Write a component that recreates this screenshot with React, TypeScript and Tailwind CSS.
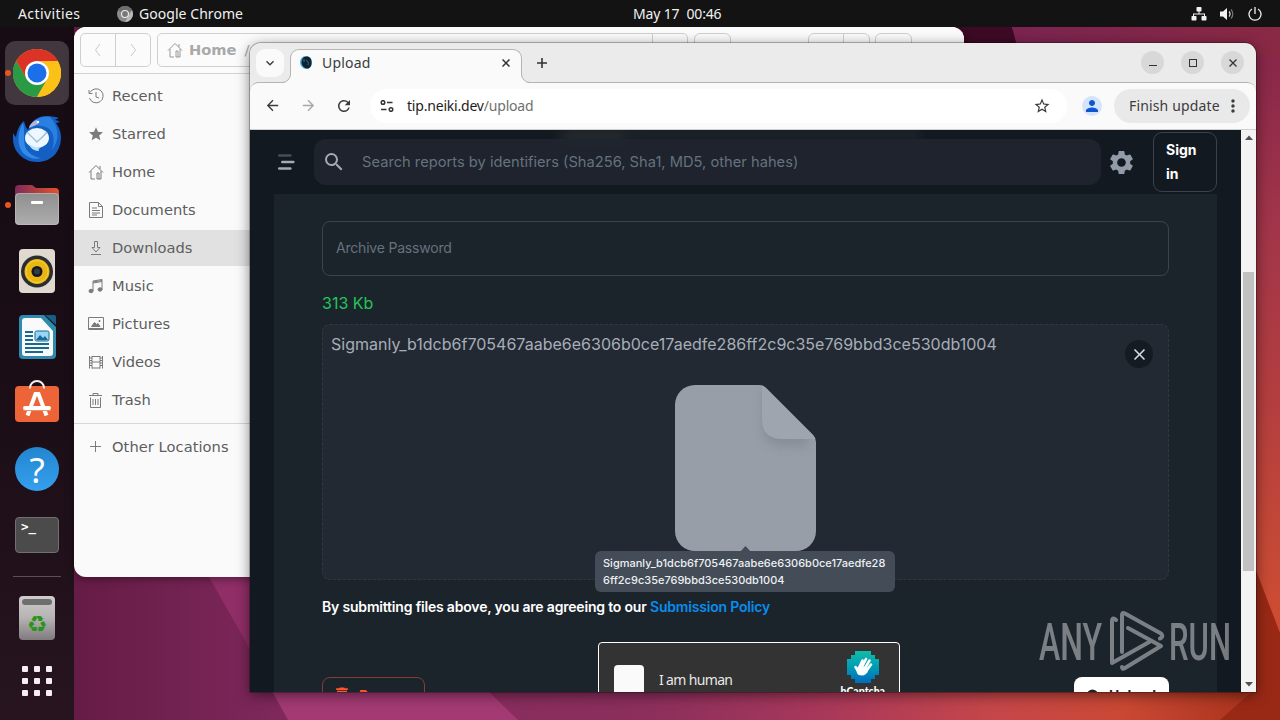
import React from 'react';
import {
    MdArrowBack,
    MdArrowForward,
    MdClose,
    MdDelete,
    MdKeyboardArrowDown,
    MdMoreVert,
    MdPerson,
    MdRefresh,
    MdSearch,
    MdSettings,
    MdStarBorder,
} from 'react-icons/md';

const Wallpaper: React.FC = () => (
    <svg className="absolute inset-0" width="1280" height="720" viewBox="0 0 1280 720">
        <defs>
            <linearGradient id="wall" x1="74" y1="0" x2="1280" y2="0" gradientUnits="userSpaceOnUse">
                <stop offset="0" stopColor="#651c45" />
                <stop offset="0.2" stopColor="#832a60" />
                <stop offset="0.48" stopColor="#8c2f5c" />
                <stop offset="0.62" stopColor="#a8385a" />
                <stop offset="0.76" stopColor="#c5464a" />
                <stop offset="0.87" stopColor="#ca4833" />
                <stop offset="1" stopColor="#a32f18" />
            </linearGradient>
            <linearGradient id="side" x1="0" y1="27" x2="0" y2="600" gradientUnits="userSpaceOnUse">
                <stop offset="0" stopColor="#84254a" />
                <stop offset="0.35" stopColor="#a23549" />
                <stop offset="0.65" stopColor="#b43e3f" />
                <stop offset="1" stopColor="#cb4c33" />
            </linearGradient>
            <linearGradient id="top" x1="1012" y1="0" x2="1280" y2="0" gradientUnits="userSpaceOnUse">
                <stop offset="0" stopColor="#7a2450" />
                <stop offset="1" stopColor="#8a2944" />
            </linearGradient>
        </defs>
        <rect width="1280" height="720" fill="url(#wall)" />
        <path d="M209 577h91v90H260Z" fill="#8f2e67" />
        <path d="M268 684h213l37 36H288Z" fill="#a33a73" />
        <path d="M1200 43h80v677h-20V43Z" fill="url(#side)" />
        <path d="M1256 43h24v677h-24Z" fill="url(#side)" />
        <path d="M900 27h112l8 18H900Z" fill="#3d0a24" />
        <path d="M1012 27h268v30h-260Z" fill="url(#top)" />
        <path d="M1254 565l26 68v87h-60l34-30Z" fill="#992915" />
    </svg>
);

const TopBar: React.FC = () => (
    <div className="relative z-10 flex h-[27px] items-center bg-[#131313] text-[14px] text-[#f0f0f0] font-['Noto_Sans',sans-serif]">
        <span className="ml-[18px] w-[99px] tracking-[0.4px] whitespace-nowrap">Activities</span>
        <svg width="16" height="16" viewBox="0 0 16 16">
            <circle cx="8" cy="8" r="8" fill="#8a8a8a" />
            <path d="M8 8 1 4.2A8 8 0 0 1 15 4.2Z" fill="#6d6d6d" />
            <path d="M15 4.2A8 8 0 0 1 8 16l3.5-6Z" fill="#b9b9b9" />
            <circle cx="8" cy="8" r="4" fill="#eee" />
            <circle cx="8" cy="8" r="2.9" fill="#777" />
        </svg>
        <span className="ml-1.5 w-[494px] tracking-[0.05px] whitespace-nowrap">Google Chrome</span>
        <span className="tracking-[-0.15px] whitespace-pre">May 17  00:46</span>
        <div className="ml-auto flex items-center gap-[13px] pr-[18px]">
            <svg width="16" height="14" viewBox="0 0 16 14" fill="#f2f2f2">
                <rect x="5.5" y="0" width="5" height="4.5" rx="0.8" />
                <rect x="0.5" y="9" width="5" height="4.5" rx="0.8" />
                <rect x="10.5" y="9" width="5" height="4.5" rx="0.8" />
                <path d="M7.5 4h1v2.5H14V9h-1V7.500H3V9H2V6.500h5.500Z" />
            </svg>
            <svg width="15" height="14" viewBox="0 0 15 14" fill="none">
                <path d="M0 4.500h3L7 1v12L3 9.500H0Z" fill="#f2f2f2" />
                <path d="M9 4.500a3.500 3.500 0 0 1 0 5" stroke="#e5e5e5" strokeWidth="1.200" />
                <path d="M11 2.500a6.500 6.500 0 0 1 0 9" stroke="#777" strokeWidth="1.200" />
            </svg>
            <svg width="14" height="14" viewBox="0 0 14 14" fill="none" stroke="#f2f2f2" strokeWidth="1.300">
                <path d="M4 2a6 6 0 1 0 6 0M7 0v7" />
            </svg>
        </div>
    </div>
);

const ChromeIcon: React.FC = () => (
    <svg width="48" height="48" viewBox="0 0 48 48">
        <circle cx="24" cy="24" r="24" fill="#fbc116" />
        <path d="M24 12h20.800l-3-4.200L24 0 3.200 12l10.400 18Z" fill="#dd3226" />
        <path d="M24 24 3.200 12a24 24 0 0 1 41.600 0Z" fill="#dd3226" />
        <path d="M3.200 12A24 24 0 0 0 24 48l10.400-18L24 24 13.600 30Z" fill="#2a9a45" />
        <path d="M44.800 12A24 24 0 0 1 24 48l10.400-18A12 12 0 0 0 24 12Z" fill="#fbc116" />
        <circle cx="24" cy="24" r="12" fill="#fff" />
        <circle cx="24" cy="24" r="9.500" fill="#1b6fe8" />
    </svg>
);

const ThunderbirdIcon: React.FC = () => (
    <svg width="48" height="48" viewBox="0 0 48 48">
        <path d="M0 18c1 2 2 3 3 4 1-7 4-13 8-16 1 4 2 7 4 9 1-2 1-4 2-5 4-6 10-9 17-9 5 0 9 1 12 2-2 1-3 1-4 2 2 0 3 1 5 2l-4 1c3 4 5 9 5 14 0 15-10 25-24 25S0 36 0 24Z" fill="#145fc4" />
        <path d="M10 8C5 16 3 29 10 38c5 5 12 7 18 5-7-1-14-5-16-12-2-8 0-16-2-23Z" fill="#338be8" />
        <path d="M18 10c4-7 12-9 19-8 8 8 11 22 2 33 3-9 2-18-4-22-6-3-10-2-17-3Z" fill="#2a80e0" />
        <path d="M16 13c1-4 4-7 8-8l1 4-4 2Z" fill="#b3b4da" />
        <circle cx="25" cy="7" r="1.200" fill="#fff" />
        <ellipse cx="24" cy="23" rx="12" ry="10" fill="#edf7ff" />
        <path d="M14 17c4 4 7 7 10 10 3-3 7-6 10-10" fill="none" stroke="#9fbdd4" strokeWidth="1.300" />
        <path d="M15 28c4 4 9 5 13 4-2 2-3 2-2 4-5 0-9-3-11-8Z" fill="#b9e2fb" />
    </svg>
);

const FilesIcon: React.FC = () => (
    <svg width="44" height="40" viewBox="0 0 44 40">
        <defs>
            <linearGradient id="tab" x1="0" x2="1">
                <stop offset="0" stopColor="#7b2b5b" />
                <stop offset="1" stopColor="#e65329" />
            </linearGradient>
            <linearGradient id="folder" x1="0" y1="0" x2="0" y2="1">
                <stop offset="0" stopColor="#8f8f8f" />
                <stop offset="1" stopColor="#adadad" />
            </linearGradient>
        </defs>
        <path d="M0 12V4a4 4 0 0 1 4-4h13l4 3h19a4 4 0 0 1 4 4v8H0Z" fill="url(#tab)" />
        <rect y="8" width="44" height="32" rx="4" fill="url(#folder)" />
        <rect x="0.500" y="8.500" width="43" height="31" rx="4" fill="none" stroke="#c4c0be" strokeOpacity="0.600" />
        <rect x="16" y="16" width="12" height="3" rx="1" fill="#fff" />
    </svg>
);

const SpeakerIcon: React.FC = () => (
    <svg width="36" height="44" viewBox="0 0 36 44">
        <rect width="36" height="44" rx="4" fill="#dfd9d0" />
        <circle cx="18" cy="22.500" r="16" fill="#2a2d31" />
        <circle cx="18" cy="22.500" r="12.500" fill="#e9b613" />
        <circle cx="18" cy="22.500" r="11" fill="none" stroke="#f8d13c" />
        <circle cx="18" cy="22.500" r="5.500" fill="#15181d" />
        <circle cx="18" cy="22.500" r="3" fill="#343b45" />
    </svg>
);

const WriterIcon: React.FC = () => (
    <svg width="37" height="44" viewBox="0 0 37 44">
        <path d="M4 0h21l12 12v28a4 4 0 0 1-4 4H4a4 4 0 0 1-4-4V4a4 4 0 0 1 4-4Z" fill="#2f8bad" />
        <path d="M26 0h9a2 2 0 0 1 2 2v8Z" fill="#175f87" />
        <path d="M6 3h16l12 13v22a3 3 0 0 1-3 3H6a3 3 0 0 1-3-3V6a3 3 0 0 1 3-3Z" fill="#fafafa" />
        <path d="M6 17h8M6 21h8M6 25h8M6 29h24M6 33h24M6 37h18" stroke="#166b93" strokeWidth="2" />
        <rect x="16" y="16" width="14" height="10" rx="1.500" fill="#9bd5f6" stroke="#166b93" />
        <path d="m17 25 4-5 3 3 2-2 3 4Z" fill="#156b96" />
    </svg>
);

const SoftwareIcon: React.FC = () => (
    <svg className="-mt-[5px]" width="44" height="42" viewBox="0 0 44 42">
        <rect y="6" width="44" height="36" rx="4" fill="#ec6438" />
        <path d="M15 8.500V8a7 7 0 0 1 14 0v.5" fill="none" stroke="#f6eee9" strokeWidth="2" />
        <path d="M12.500 35.500 20.500 14h3l8 21.500" fill="none" stroke="#fff" strokeWidth="4" />
        <rect x="8" y="26" width="28" height="4" rx="2" fill="#fff" />
        <path d="M8 30.500h28" stroke="#ec8c69" />
    </svg>
);

const HelpIcon: React.FC = () => (
    <div className="flex h-11 w-11 items-center justify-center rounded-full bg-linear-to-b from-[#2385d0] to-[#35a0ee] text-[35px] leading-none text-white font-['Noto_Sans',sans-serif]">
        ?
    </div>
);

const TerminalIcon: React.FC = () => (
    <div className="h-9 w-11 rounded-[4px] border border-[#707070] bg-[#4b4b4b] pl-[5px] text-[12.5px] leading-[17px] font-bold text-white font-['DejaVu_Sans_Mono',monospace]">
        &gt;_
    </div>
);

const TrashIcon: React.FC = () => (
    <div className="flex h-11 w-9 flex-col items-center rounded-[4px] bg-linear-to-b from-[#cfcdcb] via-[#b5b3b3] to-[#817b80] pt-[3px]">
        <div className="h-[6px] w-[30px] rounded-[3px] bg-[#6f6f6f]" />
        <span className="mt-[7px] text-[23px] leading-[24px] font-bold text-[#2a9419] font-['DejaVu_Sans',sans-serif]">♻</span>
    </div>
);

const dockApps = [
    { name: 'chrome', icon: <ChromeIcon />, active: true, running: true },
    { name: 'thunderbird', icon: <ThunderbirdIcon /> },
    { name: 'files', icon: <FilesIcon />, running: true },
    { name: 'music', icon: <SpeakerIcon /> },
    { name: 'writer', icon: <WriterIcon /> },
    { name: 'software', icon: <SoftwareIcon /> },
    { name: 'help', icon: <HelpIcon /> },
    { name: 'terminal', icon: <TerminalIcon /> },
];

const Dock: React.FC = () => (
    <div className="relative flex h-[693px] w-[74px] flex-col items-center bg-linear-to-b from-[#170c13] via-[#1a0d16] to-[#27141f] pt-[13px]">
        {dockApps.map((app) => (
            <div key={app.name} className="relative flex h-[66px] w-full shrink-0 items-center justify-center">
                <div
                    className={
                        app.active
                            ? 'flex h-16 w-16 items-center justify-center rounded-[10px] bg-[#43373f]'
                            : 'flex h-16 w-16 items-center justify-center'
                    }
                >
                    {app.icon}
                </div>
                {app.running && <span className="absolute top-[30px] left-[5px] h-[6px] w-[6px] rounded-full bg-[#e95420]" />}
            </div>
        ))}
        <div className="flex h-[17px] shrink-0 items-center">
            <div className="h-px w-12 bg-[#5b5057]" />
        </div>
        <div className="flex h-[66px] shrink-0 items-center">
            <TrashIcon />
        </div>
        <div className="grid h-[60px] shrink-0 grid-cols-3 content-center gap-[6px]">
            {[0, 1, 2, 3, 4, 5, 6, 7, 8].map((dot) => (
                <span key={dot} className="h-[6px] w-[6px] rounded-[1px] bg-[#f7edf4]" />
            ))}
        </div>
    </div>
);

const homePath = 'M1 8.500 8 1.500l7 7M3 7v8h4M13 7v8h-2M12 2v3M9 9h2v6H9Z';

const places = [
    { name: 'Recent', d: 'M2 4.500A7 7 0 1 1 1.500 10M1 2v3.500h3.500M8 4v5l3 1' },
    { name: 'Starred', d: 'm8 1.200 2 4.600 5 .4-3.800 3.200 1.200 4.900L8 11.700l-4.400 2.600 1.200-4.900L1 6.200l5-.4Z', solid: true },
    { name: 'Home', d: homePath },
    { name: 'Documents', d: 'M1.500 .500h9l4 4v11h-13ZM10.500 .500v4h4M4 6h5M4 8.500h8M4 11h8M4 13h5' },
    { name: 'Downloads', d: 'M6.500 1.500h3v6h2.500L8 12 4 7.500h2.500ZM3 14.500h10', active: true },
    { name: 'Music', d: 'M5 13V3l9-1.500v10M5 5l9-1.500M5 4l9-1.500', notes: true },
    { name: 'Pictures', d: 'M.500 1.500h15v12H.500ZM.500 12.500h15', picture: true },
    { name: 'Videos', d: 'M1.500 2v12.500M14.500 2v12.500M4 2v12.500M12 2v12.500M4 2.500h8M4 8h8M4 14h8M1.500 4H4M1.500 6.500H4M1.500 9H4M1.500 11.500H4M12 4h2.500M12 6.500h2.500M12 9h2.500M12 11.500h2.500' },
    { name: 'Trash', d: 'M1 3.500h13M5 3.500v-2h5v2M2.500 5.500v10h10v-10M5 7v6M7.500 7v6M10 7v6' },
];

const FileManager: React.FC = () => (
    <div className="absolute top-[27px] left-[74px] h-[550px] w-[890px] overflow-hidden rounded-[12px] bg-[#fafafa] text-[14.67px] text-[#5e5e5e] shadow-[0_2px_8px_rgba(0,0,0,0.4)] font-['DejaVu_Sans',sans-serif]">
        <div className="flex h-[47px] items-start border-b border-[#d3d3d3] bg-[#fbfbfb] pt-[6px] pl-[6px]">
            <div className="flex h-[34px] w-[71px] rounded-[5px] border border-[#cfcfcf]">
                <div className="flex w-[35px] items-center justify-center border-r border-[#cfcfcf]">
                    <svg width="8" height="14" viewBox="0 0 8 14" fill="none" stroke="#c9c9c9"><path d="M6 1 1.500 7 6 13" /></svg>
                </div>
                <div className="flex flex-1 items-center justify-center">
                    <svg width="8" height="14" viewBox="0 0 8 14" fill="none" stroke="#c9c9c9"><path d="m2 1 4.500 6L2 13" /></svg>
                </div>
            </div>
            <div className="ml-[6px] flex h-[34px] w-[531px] items-center rounded-[5px] border border-[#cfcfcf] pl-[9px] font-bold text-[#a9a9a9]">
                <svg width="16" height="16" viewBox="0 0 16 16" fill="none" stroke="#999"><path d={homePath} /></svg>
                <span className="ml-[6px]">Home</span>
                <span className="ml-[8px] font-normal">/</span>
                <div className="ml-auto h-full w-[35px] border-l border-[#cfcfcf]" />
            </div>
            <div className="ml-[6px] h-[34px] w-[37px] rounded-[6px] border border-[#cfcfcf]" />
            <div className="ml-[77px] h-[34px] w-[62px] rounded-[6px] border border-[#cfcfcf]">
                <div className="h-full w-[35px] border-r border-[#cfcfcf]" />
            </div>
            <div className="ml-[5px] h-[34px] w-[37px] rounded-[6px] border border-[#cfcfcf]" />
        </div>
        <div className="flex w-[178px] flex-col gap-[2px] pt-1">
            {places.map((place) => (
                <div
                    key={place.name}
                    className={place.active ? 'flex h-9 items-center bg-[#e1e1e1] pl-[14px]' : 'flex h-9 items-center pl-[14px]'}
                >
                    <svg width="16" height="16" viewBox="0 0 16 16" fill={place.solid ? '#7b7b7b' : 'none'} stroke={place.solid ? 'none' : '#7b7b7b'}>
                        <path d={place.d} />
                        {place.notes && <path d="M5 13a2 1.700 0 1 1-2-1.700c1 0 2 .3 2 1.700ZM14 11.500a2 1.700 0 1 1-2-1.700c1 0 2 .3 2 1.700Z" fill="#7b7b7b" />}
                        {place.picture && <path d="m3.500 10.500 3-4 2 2 1.500-1 2 3ZM11 4.500h1v1h-1Z" fill="#7b7b7b" />}
                    </svg>
                    <span className="ml-2">{place.name}</span>
                </div>
            ))}
        </div>
        <div className="mt-[5px] h-px w-[178px] bg-[#d6d6d6]" />
        <div className="mt-[5px] flex h-9 items-center pl-[14px]">
            <svg width="16" height="16" viewBox="0 0 16 16" stroke="#7b7b7b"><path d="M2 7.500h11M7.500 2v11" /></svg>
            <span className="ml-2 tracking-[0.05px]">Other Locations</span>
        </div>
    </div>
);

const TabStrip: React.FC = () => (
    <div className="flex h-[39px] items-start bg-[#ebebeb] pt-[6px] pl-[6px] text-[#3c3c3c]">
        <div className="flex h-7 w-7 items-center justify-center rounded-[9px] bg-[#fafafa]">
            <MdKeyboardArrowDown size={16} />
        </div>
        <div className="relative z-10 ml-[6px] flex h-[34px] w-[232px] items-center rounded-t-[9px] border border-b-0 border-[#b4b4b4] bg-[#fafafa] pb-[8px] pl-[9px]">
            <svg className="absolute bottom-0 -left-[9px]" width="9" height="9" viewBox="0 0 9 9">
                <path d="M9 0v9H0A8.500 8.500 0 0 0 8.500 0" fill="#fafafa" />
                <path d="M0 8.500A8.500 8.500 0 0 0 8.500 0" fill="none" stroke="#b4b4b4" />
            </svg>
            <svg className="absolute -right-[9px] bottom-0" width="9" height="9" viewBox="0 0 9 9">
                <path d="M0 0v9h9A8.500 8.500 0 0 1 .500 0" fill="#fafafa" />
                <path d="M9 8.500A8.500 8.500 0 0 1 .500 0" fill="none" stroke="#b4b4b4" />
            </svg>
            <svg width="13" height="13" viewBox="0 0 13 13">
                <path d="M6 0c4 0 6 3 6 6.500S10 13 6.500 13 0 10 0 6.500 2 0 6 0Z" fill="#4eb4df" />
                <path d="M6.500 .500c3 0 5 2 5 6S9.500 12.500 7 12.500 1.500 9.500 1.500 6.500 3 .500 6.500 .500Z" fill="#10232f" />
                <path d="M6 4c2 1 3 3 2 5M4 3v3" fill="none" stroke="#2d7595" />
            </svg>
            <span className="ml-[9px] text-[14px] leading-5 tracking-[0.2px]">Upload</span>
            <svg className="mr-[11px] ml-auto" width="8" height="8" viewBox="0 0 8 8" stroke="#333" strokeWidth="1.500"><path d="m.5.5 7 7M7.500.5l-7 7" /></svg>
        </div>
        <svg className="mt-2 ml-[14px]" width="12" height="12" viewBox="0 0 12 12" stroke="#333" strokeWidth="1.600"><path d="M6 1v10M1 6h10" /></svg>
        <div className="mt-[2px] mr-[12px] ml-auto flex gap-[17px]">
            <div className="flex h-[23px] w-[23px] items-center justify-center rounded-full bg-[#d8d8d8]">
                <svg width="8" height="8" viewBox="0 0 8 8" stroke="#333"><path d="M0 6.500h8" /></svg>
            </div>
            <div className="flex h-[23px] w-[23px] items-center justify-center rounded-full bg-[#d8d8d8]">
                <div className="h-2 w-2 border border-[#333]" />
            </div>
            <div className="flex h-[23px] w-[23px] items-center justify-center rounded-full bg-[#d8d8d8]">
                <svg width="8" height="8" viewBox="0 0 8 8" stroke="#333" strokeWidth="1.300"><path d="m.5.5 7 7M7.500.5l-7 7" /></svg>
            </div>
        </div>
    </div>
);

const Toolbar: React.FC = () => (
    <div className="bg-[#ebebeb]">
        <div className="flex h-12 items-center rounded-t-[9px] border-t border-b border-t-[#b4b4b4] border-b-[#d0d0d0] bg-[#fafafa] pb-px pl-2 text-[#3c3c3c]">
            <div className="flex gap-2">
                <div className="flex h-7 w-7 items-center justify-center"><MdArrowBack size={17} /></div>
                <div className="flex h-7 w-7 items-center justify-center text-[#a8a8a8]"><MdArrowForward size={17} /></div>
                <div className="flex h-7 w-7 items-center justify-center"><MdRefresh size={18} /></div>
            </div>
            <div className="ml-3 flex h-[34px] w-[697px] items-center rounded-full bg-white pr-4 pl-[10px]">
                <svg width="14" height="12" viewBox="0 0 14 12" fill="none" stroke="#333" strokeWidth="1.500">
                    <circle cx="3" cy="2.500" r="1.800" />
                    <path d="M7 2.500h5.500M1 9.500h5.500" />
                    <circle cx="11" cy="9.500" r="1.800" />
                </svg>
                <span className="ml-[13px] text-[14px] tracking-[-0.2px] text-[#1d1d1d]">
                    tip.neiki.dev<span className="text-[#6f6f6f]">/upload</span>
                </span>
                <MdStarBorder className="ml-auto" size={18} />
            </div>
            <div className="ml-[15px] flex h-5 w-5 items-center justify-center rounded-full bg-[#d5e3fd] text-[#0b57d0]">
                <MdPerson size={18} />
            </div>
            <div className="ml-3 flex h-[34px] w-[136px] items-center rounded-full bg-[#e9e9e9] pl-[15px] text-[14px] tracking-[0.15px]">
                <span className="whitespace-nowrap">Finish update</span>
                <MdMoreVert className="mr-[7px] ml-auto" size={20} />
            </div>
        </div>
    </div>
);

const PageHeader: React.FC = () => (
    <div className="relative flex h-16 items-center bg-[#131920] pl-[27px]">
        <div className="absolute top-0 left-[310px] h-3 w-[70px] rounded-full bg-[#3a403e] opacity-60 blur-[7px]" />
        <div className="absolute top-0 left-[380px] h-2 w-[290px] bg-[#292e36] opacity-60 blur-[4px]" />
        <svg width="18" height="18" viewBox="0 0 18 18" fill="none" strokeWidth="2.600" strokeLinecap="round">
            <path d="M2.300 2.500h11" stroke="#474e58" />
            <path d="M5.300 9h11" stroke="#a5abb4" />
            <path d="M2.300 15.500h11" stroke="#a5abb4" />
        </svg>
        <div className="relative ml-[19px] flex h-[46px] w-[787px] items-center rounded-[12px] bg-[#20252f]/90 pl-[8px]">
            <MdSearch className="text-[#a3aab3]" size={24} />
            <span className="ml-[16px] text-[14.7px] whitespace-nowrap text-[#65727e]">
                Search reports by identifiers (Sha256, Sha1, MD5, other hahes)
            </span>
        </div>
        <MdSettings className="ml-[6px] text-[#929ca8]" size={29} />
        <div className="ml-[17px] h-[60px] w-16 rounded-[9px] border border-[#3a434c] py-[5px] pl-[12px] text-[14px] leading-6 font-bold text-white">
            Sign
            <br />
            in
        </div>
    </div>
);

const FilePreview: React.FC = () => (
    <svg width="141" height="166" viewBox="0 0 141 166">
        <defs>
            <filter id="fold" x="-20%" y="-20%" width="150%" height="150%">
                <feGaussianBlur stdDeviation="4" />
            </filter>
            <clipPath id="sheet">
                <path d="M20 0H84q4 0 7 3L138 50q3 3 3 7v89a20 20 0 0 1-20 20H20A20 20 0 0 1 0 146V20A20 20 0 0 1 20 0Z" />
            </clipPath>
        </defs>
        <g clipPath="url(#sheet)">
            <rect width="141" height="166" fill="#979ea8" />
            <path d="M87 5v33q0 24 22 24h24V50Z" fill="#828993" opacity="0.700" filter="url(#fold)" />
            <path d="M87 0v34q0 20 20 20h34V0Z" fill="#9fa5af" />
        </g>
    </svg>
);

const HCaptcha: React.FC = () => (
    <div className="ml-[173px] flex h-[78px] w-[302px] rounded-[4px] border border-white bg-[#333]">
        <div className="mt-[22px] ml-[15px] h-[30px] w-[30px] rounded-[4px] bg-[#fafafa]" />
        <span className="mt-[27px] ml-[15px] text-[14px] leading-5 tracking-[-0.65px] text-[#e8e8e8] font-['Noto_Sans',sans-serif]">I am human</span>
        <div className="mt-[8px] mr-[14px] ml-auto flex flex-col items-center">
            <svg width="32" height="32" viewBox="0 0 32 32">
                <defs>
                    <linearGradient id="hc" x1="0" y1="0" x2="0" y2="1">
                        <stop offset="0" stopColor="#12bca8" />
                        <stop offset="0.500" stopColor="#009cb4" />
                        <stop offset="1" stopColor="#006bc0" />
                    </linearGradient>
                </defs>
                <path d="M8 0h16v4h4v4h4v16h-4v4h-4v4H8v-4H4v-4H0V8h4V4h4Z" fill="url(#hc)" />
                <g stroke="#fff" strokeWidth="2.600" strokeLinecap="round" fill="none">
                    <path d="m12 17 3.500-7.500M14.500 17l4.500-9M17.500 18l5-8.500M20 19l4-5.500M8.500 16l2.500 4" />
                </g>
                <path d="M11 15.500h9l1.500 3c-1 4-3.500 6-7 6-4 0-5.500-3-4.500-6Z" fill="#fff" />
            </svg>
            <span className="mt-[1px] text-[10.500px] leading-[14px] font-black text-white font-['Lato',sans-serif]">hCaptcha</span>
        </div>
    </div>
);

const UploadPage: React.FC = () => (
    <div className="h-[562px] w-[991px] overflow-hidden bg-[#131920] font-['Inter',sans-serif]">
        <PageHeader />
        <div className="mx-6 flex h-[498px] flex-col overflow-hidden bg-[#1c242b] px-12 pt-[27px]">
            <div className="flex h-[55px] shrink-0 items-center rounded-[8px] border border-[#3b444d] pb-[2px] pl-[13px] text-[14px] tracking-[-0.2px] text-[#65717d]">
                Archive Password
            </div>
            <div className="flex h-12 shrink-0 items-center pt-[6px] text-[16px] text-[#22c55e]">313 Kb</div>
            <div className="relative h-[256px] shrink-0 rounded-[8px] border border-dashed border-[#2f3841] bg-[#222933] pt-[7px]">
                <div className="pl-[8px] text-[16px] leading-6 tracking-[0.01px] whitespace-nowrap text-[#a7aeb8]">
                    Sigmanly_b1dcb6f705467aabe6e6306b0ce17aedfe286ff2c9c35e769bbd3ce530db1004
                </div>
                <div className="mt-[29px] flex justify-center">
                    <FilePreview />
                </div>
                <div className="absolute top-[15px] right-[15px] flex h-7 w-7 items-center justify-center rounded-full bg-[#151b22] text-[#d8dde3]">
                    <MdClose size={19} />
                </div>
                <div className="absolute top-[226px] left-[272px] w-[300px] rounded-[6px] bg-[#434c57] px-2 py-[4px] text-[11px] leading-[16.5px] font-medium text-[#edf0f3]">
                    <svg className="absolute -top-[5px] left-[145px]" width="11" height="6" viewBox="0 0 11 6">
                        <path d="M0 6 5.500 0 11 6Z" fill="#434c57" />
                    </svg>
                    Sigmanly_b1dcb6f705467aabe6e6306b0ce17aedfe28
                    <br />
                    6ff2c9c35e769bbd3ce530db1004
                </div>
            </div>
            <div className="mt-[15px] shrink-0 text-[14px] leading-6 font-semibold tracking-[-0.185px] whitespace-nowrap text-white">
                By submitting files above, you are agreeing to our <span className="text-[#078dee]">Submission Policy</span>
            </div>
            <div className="mt-[23px] flex shrink-0 items-start">
                <div className="mt-[35px] flex h-9 w-[103px] items-center rounded-[8px] border border-[#843c38] pl-[9px] text-[14px] font-bold text-[#ff5630]">
                    <MdDelete size={20} />
                    <span className="ml-[7px]">Remove</span>
                </div>
                <HCaptcha />
                <div className="mt-[35px] ml-[174px] flex h-9 w-[95px] items-center rounded-[8px] bg-white pl-[12px] text-[14px] font-bold text-[#1c252e]">
                    <svg width="14" height="14" viewBox="0 0 14 14"><circle cx="6.500" cy="7" r="5.500" fill="#1c252e" /></svg>
                    <span className="ml-[9px] tracking-[-0.3px]">Upload</span>
                </div>
            </div>
        </div>
    </div>
);

const ScrollBar: React.FC = () => (
    <div className="flex w-[15px] flex-col items-center bg-[#f3f3f3] py-[5px]">
        <svg width="8" height="5" viewBox="0 0 8 5"><path d="M0 5 4 .500 8 5Z" fill="#505050" /></svg>
        <div className="mt-[132px] h-[299px] w-[11px] bg-[#c1c1c1]" />
        <svg className="mt-auto" width="8" height="5" viewBox="0 0 8 5"><path d="M0 0h8L4 4.500Z" fill="#505050" /></svg>
    </div>
);

const Browser: React.FC = () => (
    <div className="absolute top-[43px] left-[250px] h-[649px] w-[1006px] rounded-t-[11px] shadow-[0_0_0_1px_rgba(0,0,0,0.25),0_3px_14px_rgba(0,0,0,0.5)] font-['Noto_Sans',sans-serif]">
        <div className="h-full overflow-hidden rounded-t-[11px]">
            <TabStrip />
            <Toolbar />
            <div className="flex">
                <UploadPage />
                <ScrollBar />
            </div>
        </div>
    </div>
);

const Watermark: React.FC = () => (
    <svg className="absolute top-[605px] left-[1035px]" width="200" height="72" viewBox="0 0 200 72" fill="#fff" opacity="0.420">
        <g fontFamily="Roboto, sans-serif" fontSize="51.500" fontWeight="500">
            <text x="4" y="54.500" textLength="63" lengthAdjust="spacingAndGlyphs">ANY</text>
            <text x="134" y="54.500" textLength="62" lengthAdjust="spacingAndGlyphs">RUN</text>
        </g>
        <g fill="none" stroke="#fff" strokeWidth="4" strokeLinejoin="round" strokeLinecap="round">
            <path d="M87 47V10q0-3 3-1.500l36 20q3 3-1 5" />
            <path d="M81 15q-4-4-4 2v41l39-22" />
            <path d="m93 23 33 18-36 22q-3 2-3-1" />
        </g>
    </svg>
);

export default function App() {
    return (
        <div className="relative h-[720px] w-[1280px] overflow-hidden bg-[#651c45]">
            <Wallpaper />
            <TopBar />
            <Dock />
            <FileManager />
            <Browser />
            <Watermark />
        </div>
    );
}
